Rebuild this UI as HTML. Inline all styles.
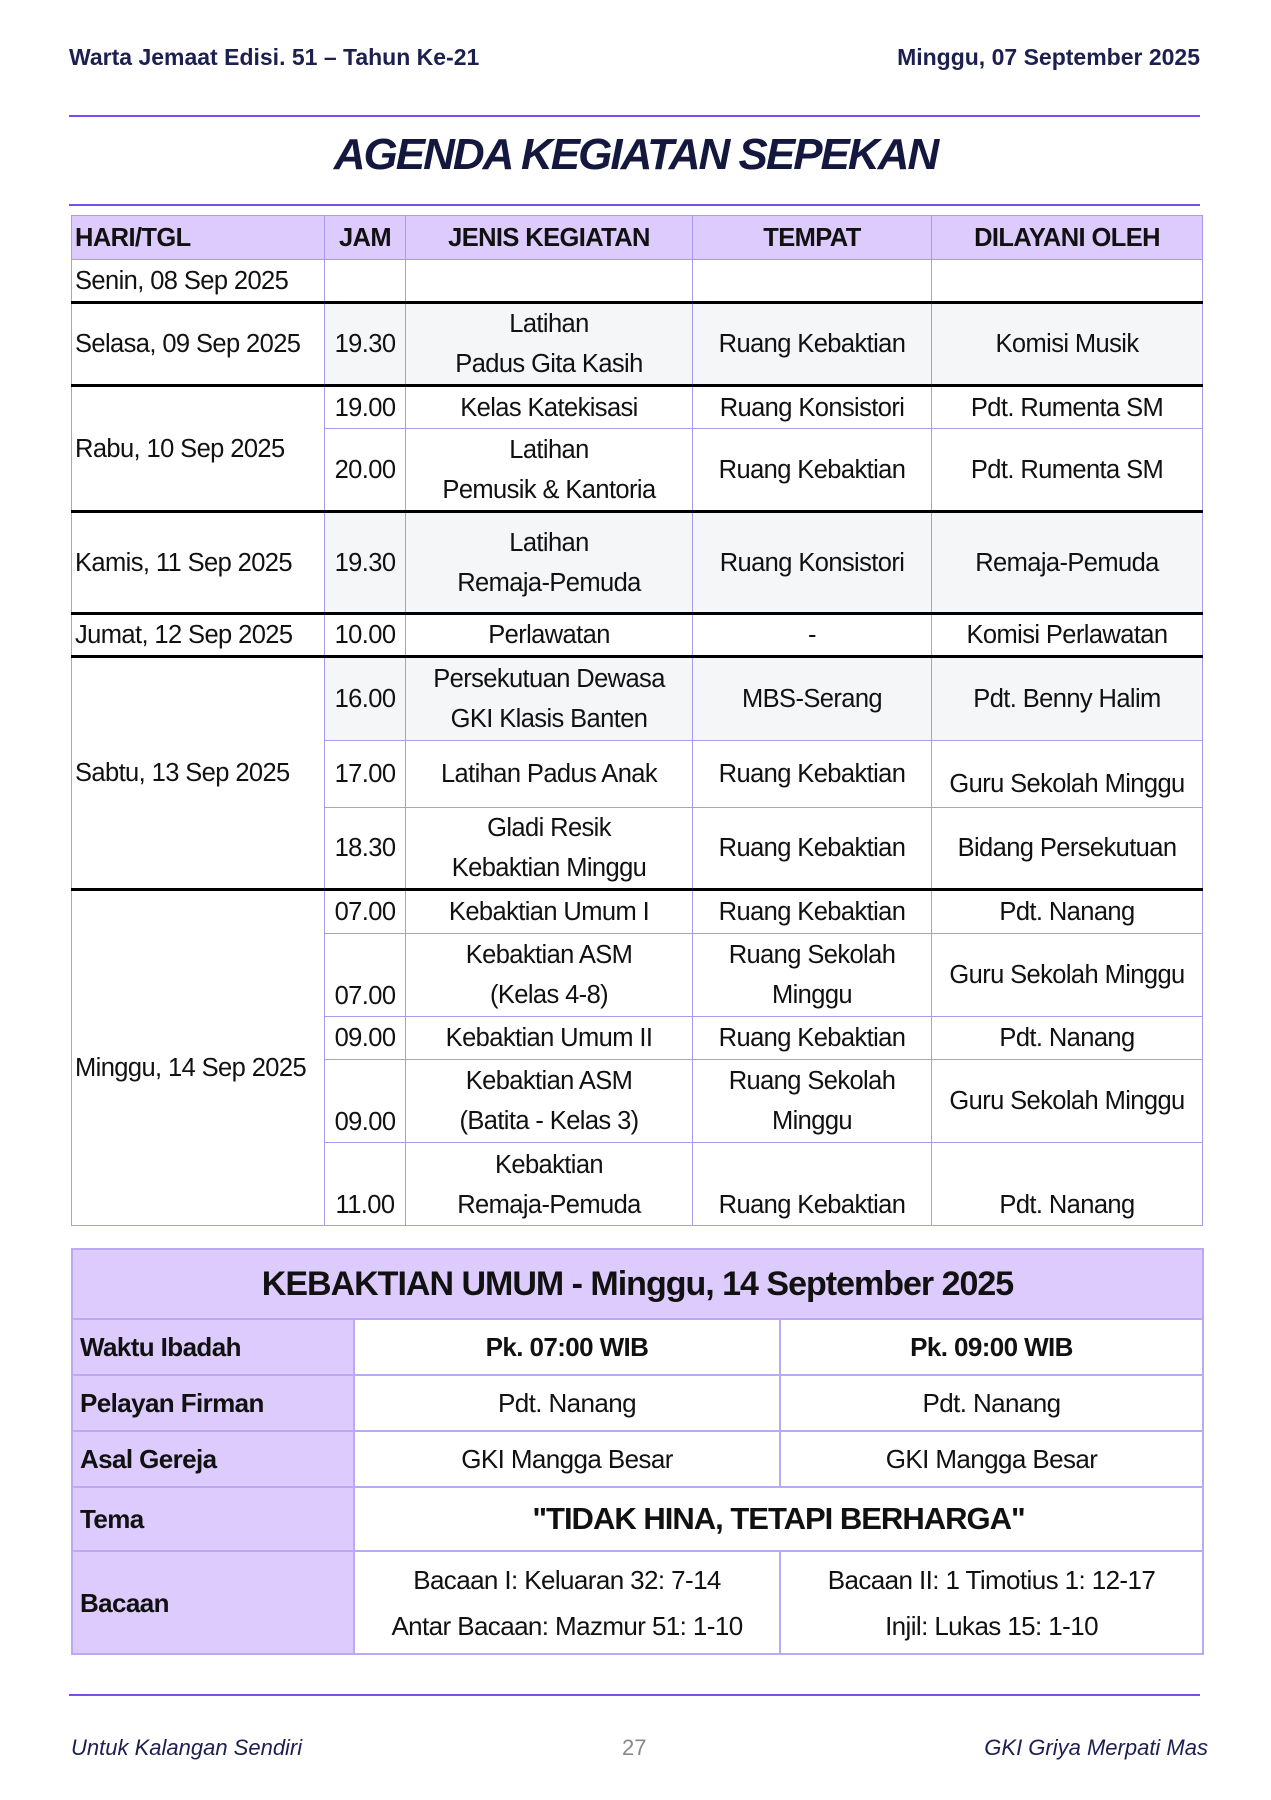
<!DOCTYPE html>
<html><head><meta charset="utf-8"><style>
*{margin:0;padding:0;box-sizing:border-box}
body{width:1271px;height:1800px;background:#fff;position:relative;font-family:"Liberation Sans",sans-serif;color:#111;overflow:hidden}
.hd{position:absolute;top:44px;font-size:23px;font-weight:bold;color:#1c1f4f}
.line{position:absolute;left:69px;width:1131px;height:2px;background:#7c4cf2}
.title{position:absolute;top:130px;left:0;width:1271px;text-align:center;font-size:44px;font-weight:bold;font-style:italic;color:#14183f;letter-spacing:-2px}
table{position:absolute;border-collapse:collapse;table-layout:fixed}
td{border:1px solid #a99af0;font-size:25.5px;text-align:center;vertical-align:middle;line-height:40px;letter-spacing:-0.6px;padding:0 1px}
.t1{left:71px;top:215px;width:1131px}
.t1 .h td{background:#dccbfc;font-weight:bold;height:44px}
.l{text-align:left;padding-left:3px}
.g td.x{background:#f5f6f8}
.tk td{border-top:3px solid #000}
.b{vertical-align:bottom}
.t2{left:71px;top:1248px;width:1131px;border:2px solid #a99af0}
.t2 td{height:56px;font-size:26px;border:2px solid #b8abf4}
.t2 .p{background:#dccbfc;text-align:left;padding-left:7px;font-weight:bold}
.ft{position:absolute;top:1735px;font-size:22px;font-style:italic;color:#1c1f4f}
</style></head><body>
<div class="hd" style="left:69px">Warta Jemaat Edisi. 51 – Tahun Ke-21</div>
<div class="hd" style="right:71px">Minggu, 07 September 2025</div>
<div class="line" style="top:115px"></div>
<div class="title">AGENDA KEGIATAN SEPEKAN</div>
<div class="line" style="top:204px"></div>
<table class="t1">
<colgroup><col style="width:253px"><col style="width:81px"><col style="width:287px"><col style="width:239px"><col style="width:271px"></colgroup>
<tr class="h"><td class="l">HARI/TGL</td><td>JAM</td><td>JENIS KEGIATAN</td><td>TEMPAT</td><td>DILAYANI OLEH</td></tr>
<tr style="height:43px"><td class="l">Senin, 08 Sep 2025</td><td></td><td></td><td></td><td></td></tr>
<tr class="tk g" style="height:83px"><td class="l">Selasa, 09 Sep 2025</td><td class="x">19.30</td><td class="x">Latihan<br>Padus Gita Kasih</td><td class="x">Ruang Kebaktian</td><td class="x">Komisi Musik</td></tr>
<tr class="tk" style="height:43px"><td class="l" rowspan="2">Rabu, 10 Sep 2025</td><td>19.00</td><td>Kelas Katekisasi</td><td>Ruang Konsistori</td><td>Pdt. Rumenta SM</td></tr>
<tr style="height:83px"><td>20.00</td><td>Latihan<br>Pemusik &amp; Kantoria</td><td>Ruang Kebaktian</td><td>Pdt. Rumenta SM</td></tr>
<tr class="tk g" style="height:102px"><td class="l">Kamis, 11 Sep 2025</td><td class="x">19.30</td><td class="x">Latihan<br>Remaja-Pemuda</td><td class="x">Ruang Konsistori</td><td class="x">Remaja-Pemuda</td></tr>
<tr class="tk" style="height:43px"><td class="l">Jumat, 12 Sep 2025</td><td>10.00</td><td>Perlawatan</td><td>-</td><td>Komisi Perlawatan</td></tr>
<tr class="tk g" style="height:84px"><td class="l" rowspan="3">Sabtu, 13 Sep 2025</td><td class="x">16.00</td><td class="x">Persekutuan Dewasa<br>GKI Klasis Banten</td><td class="x">MBS-Serang</td><td class="x">Pdt. Benny Halim</td></tr>
<tr style="height:67px"><td>17.00</td><td>Latihan Padus Anak</td><td>Ruang Kebaktian</td><td style="padding-top:20px">Guru Sekolah Minggu</td></tr>
<tr style="height:82px"><td>18.30</td><td>Gladi Resik<br>Kebaktian Minggu</td><td>Ruang Kebaktian</td><td>Bidang Persekutuan</td></tr>
<tr class="tk" style="height:44px"><td class="l" rowspan="5" style="padding-top:20px">Minggu, 14 Sep 2025</td><td>07.00</td><td>Kebaktian Umum I</td><td>Ruang Kebaktian</td><td>Pdt. Nanang</td></tr>
<tr style="height:83px"><td class="b">07.00</td><td>Kebaktian ASM<br>(Kelas 4-8)</td><td>Ruang Sekolah<br>Minggu</td><td>Guru Sekolah Minggu</td></tr>
<tr style="height:43px"><td>09.00</td><td>Kebaktian Umum II</td><td>Ruang Kebaktian</td><td>Pdt. Nanang</td></tr>
<tr style="height:83px"><td class="b">09.00</td><td>Kebaktian ASM<br>(Batita - Kelas 3)</td><td>Ruang Sekolah<br>Minggu</td><td>Guru Sekolah Minggu</td></tr>
<tr style="height:83px"><td class="b">11.00</td><td class="b">Kebaktian<br>Remaja-Pemuda</td><td class="b">Ruang Kebaktian</td><td class="b">Pdt. Nanang</td></tr>
</table>
<table class="t2">
<colgroup><col style="width:282px"><col style="width:426px"><col style="width:423px"></colgroup>
<tr><td colspan="3" style="background:#dccbfc;height:70px;font-size:34px;font-weight:bold;letter-spacing:-1px">KEBAKTIAN UMUM - Minggu, 14 September 2025</td></tr>
<tr><td class="p">Waktu Ibadah</td><td style="font-weight:bold">Pk. 07:00 WIB</td><td style="font-weight:bold">Pk. 09:00 WIB</td></tr>
<tr><td class="p">Pelayan Firman</td><td>Pdt. Nanang</td><td>Pdt. Nanang</td></tr>
<tr><td class="p">Asal Gereja</td><td>GKI Mangga Besar</td><td>GKI Mangga Besar</td></tr>
<tr><td class="p" style="height:64px">Tema</td><td colspan="2" style="font-size:31px;font-weight:bold;letter-spacing:-1px">"TIDAK HINA, TETAPI BERHARGA"</td></tr>
<tr><td class="p" style="height:103px">Bacaan</td><td style="line-height:46px">Bacaan I: Keluaran 32: 7-14<br>Antar Bacaan: Mazmur 51: 1-10</td><td style="line-height:46px">Bacaan II: 1 Timotius 1: 12-17<br>Injil: Lukas 15: 1-10</td></tr>
</table>
<div class="line" style="top:1694px"></div>
<div class="ft" style="left:71px">Untuk Kalangan Sendiri</div>
<div class="ft" style="left:622px;font-style:normal;color:#888">27</div>
<div class="ft" style="right:63px">GKI Griya Merpati Mas</div>
</body></html>
